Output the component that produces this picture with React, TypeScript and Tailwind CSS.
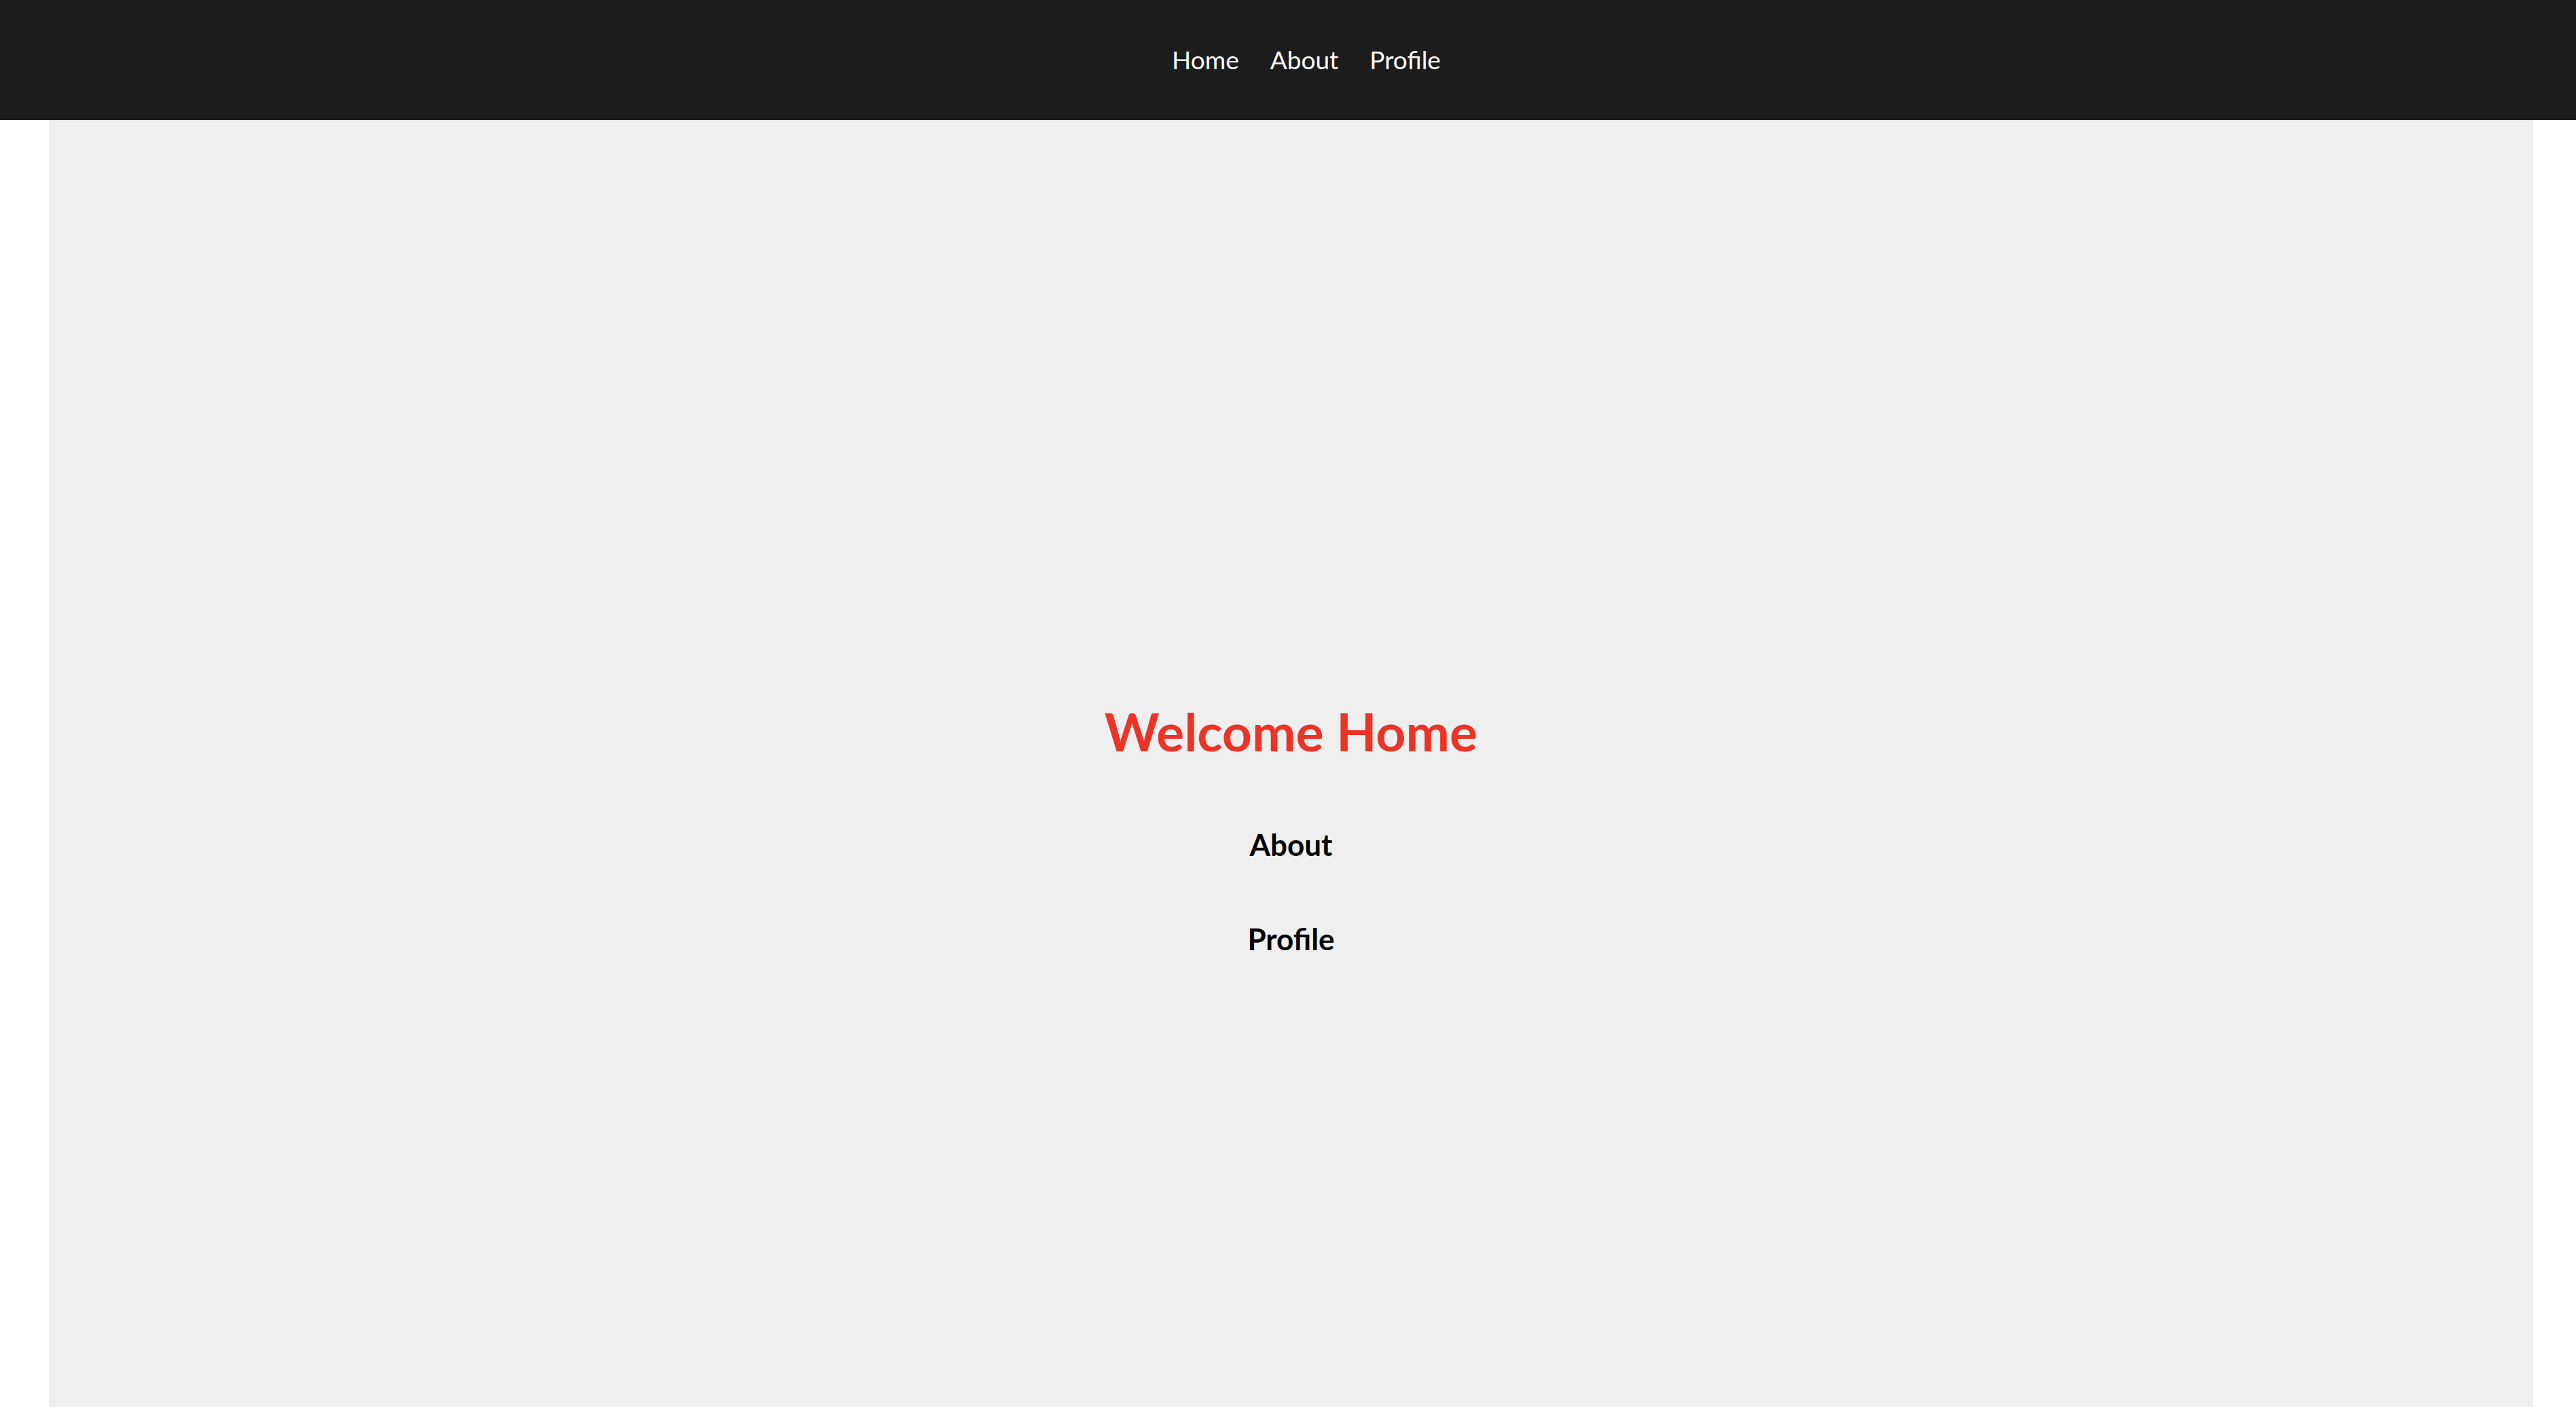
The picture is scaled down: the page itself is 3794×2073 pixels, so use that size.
import React from 'react';

const links = ['Home', 'About', 'Profile'];

const App: React.FC = () => {
  return (
    <div className="min-h-screen bg-white font-['Lato',sans-serif]">
      <nav className="h-[177px] bg-[#1c1c1c] flex items-center justify-center pl-[54px]">
        <ul className="flex gap-[46px]">
          {links.map((l) => (
            <li key={l}>
              <a href="#" className="text-white text-[37px] leading-none">
                {l}
              </a>
            </li>
          ))}
        </ul>
      </nav>
      <main className="ml-[72px] w-[3659px] h-[1896px] bg-[#efefef] flex flex-col items-center pt-[862px]">
        <h1 className="text-[77px] font-bold leading-none text-[#eb3326]">Welcome Home</h1>
        <h2 className="mt-[106px] text-[44px] font-bold leading-none text-black">About</h2>
        <h2 className="mt-[95px] text-[44px] font-bold leading-none text-black">Profile</h2>
      </main>
    </div>
  );
};

export default App;
